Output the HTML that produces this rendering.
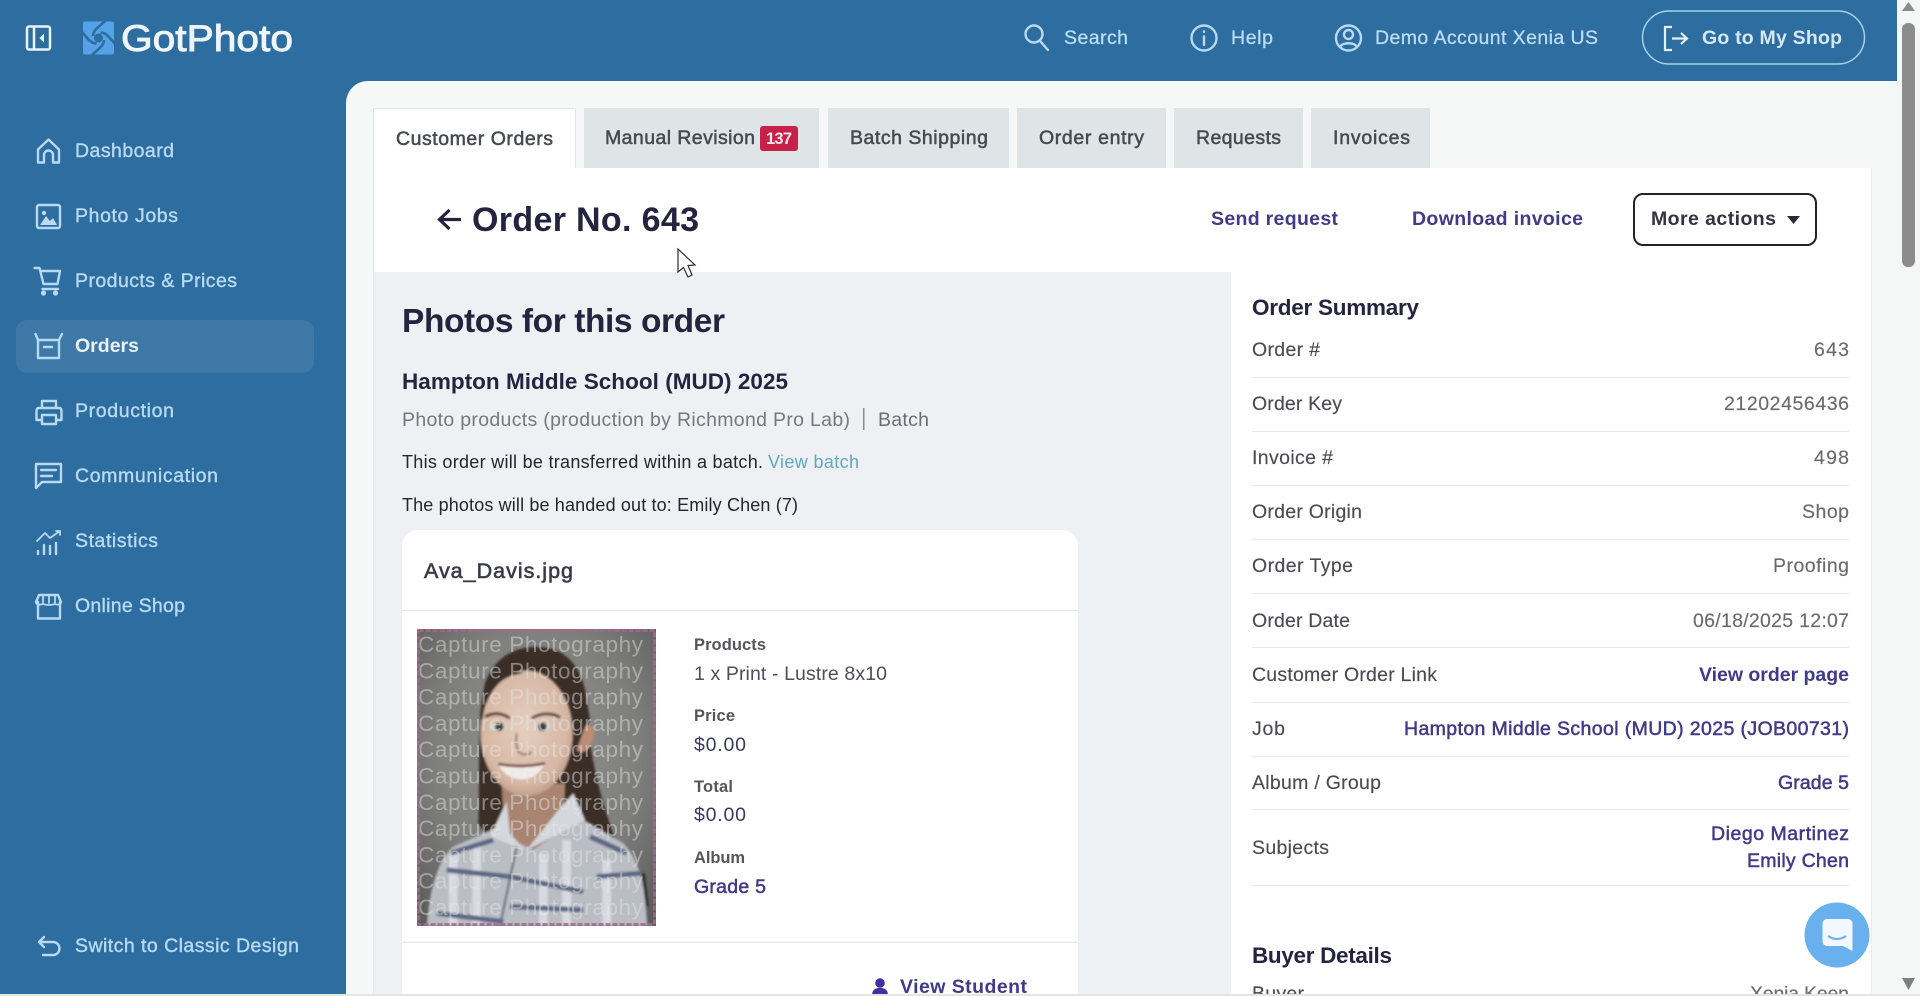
<!DOCTYPE html>
<html lang="en"><head><meta charset="utf-8"><title>Order No. 643</title>
<style>
html,body{margin:0;padding:0;width:1920px;height:996px;overflow:hidden;background:#fff}
svg{display:block;filter:blur(.35px)}
text{font-family:"Liberation Sans",Arial,sans-serif;white-space:pre}
.nav{font-size:19.5px;fill:#b7d9f1;stroke:#b7d9f1;stroke-width:.4}
.top{font-size:19.5px;fill:#bcdcf2;stroke:#bcdcf2;stroke-width:.3}
.tab{font-size:19.5px;fill:#454a50;stroke:#454a50;stroke-width:.5}
.k{font-size:19.5px;fill:#4b4b55;stroke:#4b4b55;stroke-width:.15}
.v{font-size:19.5px;fill:#6a6a6f;stroke:#6a6a6f;stroke-width:.15}
.l{font-size:19.5px;fill:#413a88;font-weight:700}
.lr{font-size:19.5px;fill:#413a88;stroke:#413a88;stroke-width:.5}
.h{fill:#24243f;font-weight:700}
.lab{font-size:16.5px;fill:#55565c;font-weight:700}
.ic{fill:none;stroke:#b7d9f1;stroke-width:2.4;stroke-linecap:round;stroke-linejoin:round}
.wm{font-size:22.5px;fill:#e6e6e6;fill-opacity:.46}
</style></head>
<body>
<svg width="1920" height="996" viewBox="0 0 1920 996" xmlns="http://www.w3.org/2000/svg">
<defs>
<filter id="b2" x="-10%" y="-10%" width="120%" height="120%"><feGaussianBlur stdDeviation="3.5"/></filter>
<radialGradient id="bg" cx=".5" cy=".42" r=".72"><stop offset="0" stop-color="#949492"/><stop offset=".6" stop-color="#7e7e7c"/><stop offset="1" stop-color="#5c5c5a"/></radialGradient>
<radialGradient id="skin" cx=".48" cy=".45" r=".66"><stop offset="0" stop-color="#e6cfc0"/><stop offset=".7" stop-color="#d6b7a3"/><stop offset="1" stop-color="#a98673"/></radialGradient>
<clipPath id="pc"><rect x="417" y="629" width="239" height="297"/></clipPath>
</defs>

<rect width="1920" height="996" fill="#2d6d9f"/>

<!-- scrollbar -->
<rect x="1897" width="23" height="996" fill="#f5f7f7"/>
<rect x="1902" y="23" width="13" height="244" rx="6" fill="#8c8c8c"/>
<path d="M1908.500 2 L1915 11 H1902Z" fill="#8c8c8c"/>
<path d="M1902 978 H1915 L1908.500 990Z" fill="#7f7f7f"/>

<!-- content panel -->
<path d="M1897 81 H368 a22 22 0 0 0 -22 22 V996 H1897Z" fill="#f6f8f8"/>

<!-- tabs -->
<rect x="373.500" y="108.500" width="202" height="62" fill="#fff" stroke="#e3e6e8"/>
<rect x="584" y="108" width="235" height="60" fill="#dfe4e7"/>
<rect x="828" y="108" width="181" height="60" fill="#dfe4e7"/>
<rect x="1017" y="108" width="149" height="60" fill="#dfe4e7"/>
<rect x="1174" y="108" width="129" height="60" fill="#dfe4e7"/>
<rect x="1311" y="108" width="119" height="60" fill="#dfe4e7"/>
<text class="tab" x="396" y="145" textLength="157">Customer Orders</text>
<text class="tab" x="605" y="144" textLength="150">Manual Revision</text>
<rect x="760" y="126" width="38" height="25" rx="3" fill="#c7214a"/>
<text x="766" y="144" font-size="16.500" font-weight="700" fill="#f6e8ec" textLength="26">137</text>
<text class="tab" x="850" y="144" textLength="138">Batch Shipping</text>
<text class="tab" x="1039" y="144" textLength="105">Order entry</text>
<text class="tab" x="1196" y="144" textLength="85">Requests</text>
<text class="tab" x="1333" y="144" textLength="77">Invoices</text>

<!-- main white surface -->
<rect x="373" y="168" width="1498" height="828" fill="#fff"/>
<rect x="374" y="166" width="201" height="4" fill="#fff"/>
<rect x="373" y="272" width="858" height="724" fill="#eff0f3"/>
<rect x="373" y="168" width="1" height="828" fill="#e4e6e8"/>
<rect x="1871" y="168" width="1" height="828" fill="#e9ebeb"/>

<!-- title row -->
<path d="M461 219.500 H440 M449.500 210 L439.500 219.500 L449.500 229" fill="none" stroke="#24243f" stroke-width="3.200"/>
<text class="h" x="472" y="231" font-size="34" textLength="227">Order No. 643</text>
<text class="l" x="1211" y="225" textLength="127">Send request</text>
<text class="l" x="1412" y="225" textLength="171">Download invoice</text>
<rect x="1634" y="194" width="182" height="51" rx="9" fill="#fff" stroke="#20222f" stroke-width="2"/>
<text x="1651" y="225" font-size="19.500" font-weight="700" fill="#33343f" textLength="125">More actions</text>
<path d="M1787 216 H1800 L1793.500 224Z" fill="#2a2b38"/>

<!-- left column -->
<text class="h" x="402" y="332" font-size="33.500" textLength="323">Photos for this order</text>
<text class="h" x="402" y="389" font-size="22.500" textLength="386">Hampton Middle School (MUD) 2025</text>
<text x="402" y="426" font-size="19.500" fill="#77787d" textLength="448">Photo products (production by Richmond Pro Lab)</text>
<rect x="863" y="408" width="1.500" height="22" fill="#8b8c90"/>
<text x="878" y="426" font-size="19.500" fill="#6c6d72" textLength="51">Batch</text>
<text x="402" y="468" font-size="18" fill="#24262c" textLength="361">This order will be transferred within a batch.</text>
<text x="768" y="468" font-size="18" fill="#5fa8bd" textLength="91">View batch</text>
<text x="402" y="511" font-size="18" fill="#24262c" textLength="396">The photos will be handed out to: Emily Chen (7)</text>

<!-- card -->
<path d="M402 996 V546 a16 16 0 0 1 16 -16 H1062 a16 16 0 0 1 16 16 V996Z" fill="#fff"/>
<text x="424" y="578" font-size="21.500" fill="#3a3b48" stroke="#3a3b48" stroke-width=".6" textLength="149">Ava_Davis.jpg</text>
<rect x="402" y="609.500" width="676" height="1.500" fill="#e8e9ea"/>
<rect x="402" y="941.500" width="676" height="1.500" fill="#e8e9ea"/>

<!-- photo -->
<g clip-path="url(#pc)">
<rect x="417" y="629" width="239" height="297" fill="url(#bg)"/>
<g transform="translate(410 620) scale(.33333)">
<g filter="url(#b2)">
<path d="M205 610 C210 480 200 300 225 190 C260 90 350 70 420 85 C500 105 535 190 535 300 C540 420 575 540 612 650 L470 700 L230 650Z" fill="#3a2d25"/>
<path d="M50 918 C60 800 85 720 130 680 L290 610 L350 640 L520 600 L640 670 C690 720 705 800 712 918Z" fill="#b9bdc4"/>
<path d="M275 490 H465 L460 625 L370 690 L285 650Z" fill="#a98471"/>
<path d="M525 320 C550 300 560 340 545 370 C530 400 510 400 500 390Z" fill="#b98d76"/>
<ellipse cx="350" cy="340" rx="138" ry="188" fill="url(#skin)"/>
<path d="M218 300 C225 220 270 165 340 160 C270 130 215 190 210 290Z" fill="#3a2d25"/>
<path d="M400 155 C470 180 495 240 500 310 L540 300 C530 210 490 150 420 135Z" fill="#3a2d25"/>
<path d="M225 290 Q265 270 300 295 M365 295 Q410 270 450 292" fill="none" stroke="#5a4336" stroke-width="9"/>
<ellipse cx="265" cy="320" rx="27" ry="13" fill="#d8d2cb"/><circle cx="268" cy="320" r="13" fill="#3c4340"/>
<ellipse cx="395" cy="320" rx="27" ry="13" fill="#d8d2cb"/><circle cx="397" cy="320" r="13" fill="#3c4340"/>
<path d="M320 340 Q315 385 330 400 Q350 408 365 396" fill="none" stroke="#9c7460" stroke-width="6"/>
<path d="M265 432 Q335 448 405 430 Q380 478 335 478 Q285 476 265 432Z" fill="#f4ece8"/>
<path d="M265 432 Q335 445 405 430" fill="none" stroke="#6e3c34" stroke-width="8"/>
<path d="M290 545 L240 650 L345 690 L300 640Z M490 520 L525 600 L350 690 L445 570Z" fill="#d4d7dc"/>
<path d="M320 680 L270 918" stroke="#5f6672" stroke-width="6" fill="none"/>
<path d="M200 680 V918 M400 700 V918 M470 660 V918 M590 720 V918 M130 690 V918" stroke="#e1e4e9" stroke-width="26" fill="none" opacity=".75"/>
<path d="M110 750 L300 770 L520 815 M80 880 L280 905 M560 770 L690 760 M120 700 L250 660 M540 650 L650 700 M300 860 L520 870" stroke="#5c6785" stroke-width="15" fill="none"/>
<path d="M700 760 L712 860" stroke="#2c2c30" stroke-width="9"/>
</g></g>
<g>
<text class="wm" x="418" y="652" textLength="225">Capture Photography</text>
<text class="wm" x="418" y="678.300" textLength="225">Capture Photography</text>
<text class="wm" x="418" y="704.600" textLength="225">Capture Photography</text>
<text class="wm" x="418" y="730.900" textLength="225">Capture Photography</text>
<text class="wm" x="418" y="757.200" textLength="225">Capture Photography</text>
<text class="wm" x="418" y="783.500" textLength="225">Capture Photography</text>
<text class="wm" x="418" y="809.800" textLength="225">Capture Photography</text>
<text class="wm" x="418" y="836.100" textLength="225">Capture Photography</text>
<text class="wm" x="418" y="862.400" textLength="225">Capture Photography</text>
<text class="wm" x="418" y="888.700" textLength="225">Capture Photography</text>
<text class="wm" x="418" y="915" textLength="225">Capture Photography</text>
</g>
<rect x="418.500" y="630.500" width="236" height="294" fill="none" stroke="#a3678f" stroke-width="3" stroke-dasharray="5 2" opacity=".85"/>
</g>

<!-- photo meta -->
<text class="lab" x="694" y="650" textLength="72">Products</text>
<text x="694" y="680" font-size="19.500" fill="#4d4e5e" textLength="193">1 x Print - Lustre 8x10</text>
<text class="lab" x="694" y="721" textLength="41">Price</text>
<text x="694" y="751" font-size="19.500" fill="#373a5e" textLength="52">$0.00</text>
<text class="lab" x="694" y="792" textLength="39">Total</text>
<text x="694" y="821" font-size="19.500" fill="#373a5e" textLength="52">$0.00</text>
<text class="lab" x="694" y="863" textLength="51">Album</text>
<text class="lr" x="694" y="893" textLength="72">Grade 5</text>
<circle cx="880" cy="983" r="4.800" fill="#3f31a0"/>
<path d="M872 996 C872 989 876 988 880 988 C884 988 888 989 888 996Z" fill="#3f31a0"/>
<text class="l" x="900" y="993" textLength="127">View Student</text>

<!-- right column -->
<text class="h" x="1252" y="315" font-size="22.500" textLength="167">Order Summary</text>
<text class="k" x="1252" y="356" textLength="68">Order #</text>
<text class="v" x="1849" y="356" text-anchor="end" textLength="35">643</text>
<text class="k" x="1252" y="410" textLength="90">Order Key</text>
<text class="v" x="1849" y="410" text-anchor="end" textLength="125">21202456436</text>
<text class="k" x="1252" y="464" textLength="81">Invoice #</text>
<text class="v" x="1849" y="464" text-anchor="end" textLength="35">498</text>
<text class="k" x="1252" y="518" textLength="110">Order Origin</text>
<text class="v" x="1849" y="518" text-anchor="end" textLength="47">Shop</text>
<text class="k" x="1252" y="572" textLength="101">Order Type</text>
<text class="v" x="1849" y="572" text-anchor="end" textLength="76">Proofing</text>
<text class="k" x="1252" y="627" textLength="98">Order Date</text>
<text class="v" x="1849" y="627" text-anchor="end" textLength="156">06/18/2025 12:07</text>
<text class="k" x="1252" y="681" textLength="185">Customer Order Link</text>
<text class="l" x="1849" y="681" text-anchor="end" textLength="150">View order page</text>
<text class="k" x="1252" y="735" textLength="33">Job</text>
<text class="lr" x="1849" y="735" text-anchor="end" textLength="445">Hampton Middle School (MUD) 2025 (JOB00731)</text>
<text class="k" x="1252" y="789" textLength="129">Album / Group</text>
<text class="lr" x="1849" y="789" text-anchor="end" textLength="71">Grade 5</text>
<text class="k" x="1252" y="854" textLength="77">Subjects</text>
<text class="lr" x="1849" y="840" text-anchor="end" textLength="138">Diego Martinez</text>
<text class="lr" x="1849" y="867" text-anchor="end" textLength="102">Emily Chen</text>
<g fill="#e6e8ea">
<rect x="1252" y="377" width="597" height="1"/><rect x="1252" y="431" width="597" height="1"/>
<rect x="1252" y="485" width="597" height="1"/><rect x="1252" y="539" width="597" height="1"/>
<rect x="1252" y="593" width="597" height="1"/><rect x="1252" y="647" width="597" height="1"/>
<rect x="1252" y="702" width="597" height="1"/><rect x="1252" y="756" width="597" height="1"/>
<rect x="1252" y="809" width="597" height="1"/><rect x="1252" y="885" width="597" height="1"/>
</g>
<text class="h" x="1252" y="963" font-size="22.500" textLength="140">Buyer Details</text>
<text class="k" x="1252" y="1000" textLength="52">Buyer</text>
<text class="v" x="1849" y="1000" text-anchor="end" textLength="99">Xenia Keen</text>

<!-- header -->
<rect x="27" y="26.500" width="23" height="23" rx="2" fill="none" stroke="#e8f2f9" stroke-width="2.500"/>
<path d="M34 27 V49" stroke="#e8f2f9" stroke-width="2.500"/>
<path d="M44 33.500 V42.500 L39.500 38Z" fill="#e8f2f9"/>
<rect x="83" y="21.500" width="31" height="33" rx="2" fill="#55a2e9"/>
<circle cx="98.500" cy="38" r="4.500" fill="#2d6d9f"/>
<g fill="none" stroke="#2d6d9f" stroke-width="2.600">
<path d="M93 36 C93 30 99 27 105 21"/>
<path d="M100.500 32.500 C106.500 32.500 110 38.500 115 44"/>
<path d="M104 40 C104 46 98 49 92 55"/>
<path d="M96.500 43.500 C90.500 43.500 87 37.500 82 32"/>
</g>
<text x="121" y="51" font-size="37" fill="#eff6fb" stroke="#eff6fb" stroke-width=".9" textLength="172" lengthAdjust="spacingAndGlyphs">GotPhoto</text>

<circle cx="1034" cy="34" r="8.500" class="ic"/><path d="M1040 41 L1048 50" class="ic" stroke-width="2.500"/>
<text class="top" x="1064" y="44" textLength="64">Search</text>
<circle cx="1204" cy="38" r="12.500" class="ic"/><path d="M1204 36.500 V45 M1204 31.500 V32" class="ic"/>
<text class="top" x="1231" y="44" textLength="42">Help</text>
<circle cx="1348.500" cy="38" r="12.500" class="ic"/><circle cx="1348.500" cy="34.500" r="4.500" class="ic"/><path d="M1340 47 C1342 42 1355 42 1357 47" class="ic"/>
<text class="top" x="1375" y="44" textLength="223">Demo Account Xenia US</text>
<rect x="1642.500" y="11" width="222" height="53" rx="26.500" fill="none" stroke="#a9d2ea" stroke-width="1.500"/>
<path d="M1672 27 H1665 V50 H1672 M1672 38.500 H1687 M1681 33 L1687 38.500 L1681 44" fill="none" stroke="#e5f1f9" stroke-width="2.200"/>
<text x="1702" y="44" font-size="19.500" font-weight="700" fill="#d4e7f4" textLength="140">Go to My Shop</text>

<!-- sidebar -->
<rect x="16" y="320" width="298" height="53" rx="11" fill="#fff" fill-opacity=".08"/>
<g class="ic">
<path d="M38 162.500 V149.500 L48.500 139.500 L59 149.500 V162.500 H53 V155 A4.500 4.500 0 0 0 44 155 V162.500Z"/>
<rect x="37" y="205" width="23" height="23" rx="2"/>
<path d="M34.500 268 H39.500 L43.500 284 H57.500 L60 271 H40.500"/><path d="M42.500 289 H58"/>
<path d="M35.500 334 L38 340 V358 H59 V340 L62 334 M38 340 H59"/>
<path d="M44 347 H52" stroke-width="2.500"/>
<path d="M42 408 V401 H56 V408 M42 420 H36.500 V411 Q36.500 408 39 408 H59 Q61.500 408 61.500 411 V420 H56 M42 415 H56 V424 H42Z"/>
<path d="M36 464 H61 V482 H42 L36 488Z"/><path d="M41 470 H56 M41 476 H52"/>
<path d="M37 541 L45 533 L50 538 L60 531 M56 531 H60 V535" stroke-width="1.800"/>
<path d="M38 551 V554 M44 545 V554 M50 546 V554 M56 543 V554" stroke-width="2.400"/>
<path d="M36 602 L39 595 H58 L61 602 M38 602 V618.500 H60 V602"/><path d="M43 595 V603 M49 595 V603 M55 595 V603 M36 602 Q36 606 43 604 Q49 606 55 604 Q61 606 61 602" stroke-width="1.800"/>
<path d="M44 937 L39 942 L44 947 M39 942 H53 A6.500 6.500 0 0 1 53 955 H43"/>
</g>
<circle cx="44" cy="213" r="2.200" fill="#b7d9f1"/>
<path d="M40 225 L46 216 L50 221 L53 218 L57 225Z" fill="#b7d9f1"/>
<circle cx="43.500" cy="293" r="2.600" fill="#b7d9f1"/><circle cx="55.500" cy="293" r="2.600" fill="#b7d9f1"/>
<text class="nav" x="75" y="157" textLength="99">Dashboard</text>
<text class="nav" x="75" y="222" textLength="103">Photo Jobs</text>
<text class="nav" x="75" y="287" textLength="162">Products &amp; Prices</text>
<text x="75" y="352" font-size="19.500" font-weight="700" fill="#e8f3fa" textLength="64">Orders</text>
<text class="nav" x="75" y="417" textLength="99">Production</text>
<text class="nav" x="75" y="482" textLength="143">Communication</text>
<text class="nav" x="75" y="547" textLength="83">Statistics</text>
<text class="nav" x="75" y="612" textLength="110">Online Shop</text>
<text class="nav" x="75" y="952" textLength="224">Switch to Classic Design</text>

<!-- cursor -->
<path d="M678 249 V272 L683.500 267.500 L688 277 L692 275 L688 265.500 L695 265Z" fill="#fff" stroke="#2d2d33" stroke-width="1.200"/>

<!-- chat bubble -->
<circle cx="1837" cy="935" r="32.500" fill="#68b0ee"/>
<path d="M1827 919 H1848 a4.500 4.500 0 0 1 4.500 4.500 V951 L1843 946 H1827 a4.500 4.500 0 0 1 -4.500 -4.500 V923.500 a4.500 4.500 0 0 1 4.500 -4.500Z" fill="#f2f8fd"/>
<path d="M1828 936 Q1837 942 1846 936" fill="none" stroke="#68b0ee" stroke-width="2"/>

<!-- bottom edge -->
<rect y="994" width="1920" height="2" fill="#dfe9dd"/>
</svg>
</body></html>
